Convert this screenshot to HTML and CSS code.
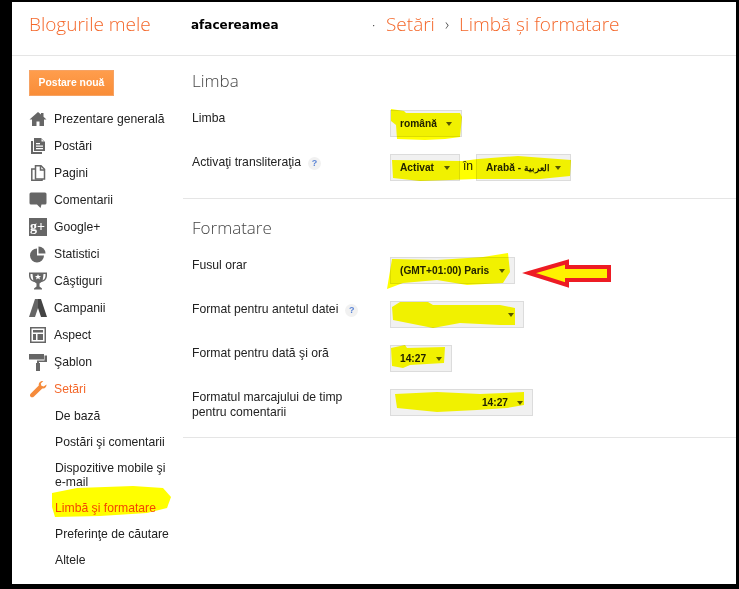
FILE: index.html
```html
<!DOCTYPE html>
<html lang="ro">
<head>
	<meta charset="UTF-8">
	<title>Limbă şi formatare</title>
	<link rel="stylesheet" href="styles.css">
</head>
<body>
	<div class="page">
		<!-- antet -->
		<div class="top">
			<div class="top-title">Blogurile mele</div>
			<div class="top-blog">afacereamea</div>
			<div class="top-dot">·</div>
			<div class="crumb">Setări</div>
			<div class="crumb-sep">›</div>
			<div class="crumb">Limbă şi formatare</div>
		</div>

		<div class="layout">
			<!-- meniu -->
			<div class="side">
				<div class="new-post">Postare nouă</div>
				<ul class="nav">
					<li><svg class="ico" viewBox="0 0 18 18"><path d="M9 2l3 2.600V3h2.500v3.800L17.500 9.500H15V16h-4.500v-4.500h-3V16H3V9.500H.5z"/></svg>Prezentare generală</li>
					<li><svg class="ico" viewBox="0 0 18 18"><path d="M2 4h2v11h9v2H2z"/><path fill-rule="evenodd" d="M5 1h7l4 4v9H5zM7 6v1.200h4V6zM7 8.500v1.200h7V8.500zM7 11v1.200h7V11zM12.500 2v2.500H15z"/></svg>Postări</li>
					<li><svg class="ico line" viewBox="0 0 18 18"><path d="M6.500 1.800h5.500l3.500 3.500v9.700h-9z"/><path d="M11.500 2v4h4"/><path d="M6 5H2.800v11.200H13V15"/></svg>Pagini</li>
					<li><svg class="ico" viewBox="0 0 18 18"><path d="M2 1.500h14a1.500 1.500 0 0 1 1.500 1.500v9a1.500 1.500 0 0 1-1.500 1.500h-3.500l-1 3.500-3.500-3.500H2A1.500 1.500 0 0 1 .5 12V3A1.500 1.500 0 0 1 2 1.500z"/></svg>Comentarii</li>
					<li><svg class="ico" viewBox="0 0 18 18"><rect width="18" height="18"/><text class="gplus" x="1" y="13">g+</text></svg>Google+</li>
					<li><svg class="ico" viewBox="0 0 18 18"><path d="M8 3.500a7 7 0 1 0 7 7H8z"/><path d="M9.500 1.500a7 7 0 0 1 7 7h-7z"/></svg>Statistici</li>
					<li><svg class="ico" viewBox="0 0 18 18"><path fill-rule="evenodd" d="M0 .5h18v3c0 3.500-2.500 6-5.500 6.500l-2 1.500v3l2.500 2v1H5v-1l2.500-2v-3l-2-1.500C2.500 9.500 0 7 0 3.500zM1.500 2v1.500c0 2 1 4 2.800 5L3.500 2zM16.500 2h-2l-.8 6.500c1.800-1 2.800-3 2.800-5z"/><path class="star" d="M9 2l.9 2.100h2.200l-1.800 1.300.7 2.200L9 6.300 7 7.600l.7-2.200-1.800-1.300h2.200z"/></svg>Câştiguri</li>
					<li><svg class="ico" viewBox="0 0 18 18"><path d="M6 0h3v9l-3 9H0z"/><path class="dark" d="M9 0h3l6 18h-6l-3-9z"/></svg>Campanii</li>
					<li><svg class="ico" viewBox="0 0 18 18"><path fill-rule="evenodd" d="M1 1h16v16H1zM2.500 2.500v13h13v-13zM4 4h10v2.500H4zM4 8h3v6H4zM8.500 8H14v6H8.500z"/></svg>Aspect</li>
					<li><svg class="ico" viewBox="0 0 18 18"><path d="M0 1h15v5.500H0zM15.500 2.500H18V9H10v2H8V7.500h7.500z"/><rect x="7" y="10" width="4" height="8"/></svg>Şablon</li>
					<li class="on"><svg class="ico" viewBox="0 0 18 18"><path d="M17.500 4.500c.3 2.300-1.700 4.400-4.200 3.900L5 16.500c-1 1-2.500 1.200-3.400.2-.9-1-.7-2.300.2-3.200l8-8C9.300 3 11.500.8 14.300 1l-2.500 2.500.6 2.300 2.300.6z"/></svg>Setări</li>
				</ul>
				<ul class="subnav">
					<li>De bază</li>
					<li>Postări şi comentarii</li>
					<li>Dispozitive mobile şi e-mail</li>
					<li class="on">Limbă şi formatare</li>
					<li>Preferinţe de căutare</li>
					<li>Altele</li>
				</ul>
			</div>

			<!-- continut -->
			<div class="main">
				<div class="sect">
					<h2>Limba</h2>
					<div class="row">
						<div class="lbl">Limba</div>
						<div class="sel">română<i></i></div>
					</div>
					<div class="row">
						<div class="lbl">Activaţi transliteraţia<span class="help">?</span></div>
						<div class="sel w-act">Activat<i></i></div>
						<span class="in">în</span>
						<div class="sel w-lang"><span>Arabă - <span class="ar">العربية</span></span><i></i></div>
					</div>
				</div>
				<div class="sect fmt">
					<h2>Formatare</h2>
					<div class="row">
						<div class="lbl">Fusul orar</div>
						<div class="sel w-zone">(GMT+01:00) Paris<i></i></div>
					</div>
					<div class="row">
						<div class="lbl">Format pentru antetul datei<span class="help">?</span></div>
						<div class="sel w-date"><i></i></div>
					</div>
					<div class="row">
						<div class="lbl">Format pentru dată şi oră</div>
						<div class="sel w-time">14:27<i></i></div>
					</div>
					<div class="row">
						<div class="lbl">Formatul marcajului de timp<br>pentru comentarii</div>
						<div class="sel w-stamp">14:27<i></i></div>
					</div>
				</div>
			</div>
		</div>

		<!-- marcaje galbene si sageata, desenate peste pagina -->
		<svg class="marks" viewBox="0 0 739 589">
			<path class="hl" d="M391 109l13 2 2 2h54l2 4-2 20-15 2-20 1-28-1-1-14-5-4z"/>
			<path class="hl" d="M392 160l70 1 16-2 40-3 53 4-1 16-30 3-45 0-20 0-25 1-30 1-27-3z"/>
			<path class="hl" d="M387 289l5-30 45 1 46-3 25-4 2 19-7 11-36 2-30-5-34 3z"/>
			<path class="hl" d="M392 307l8-5h28l5 3h67l15 3v17h-15l-40-2-27 5-40-8z"/>
			<path class="hl" d="M391 348l14-3 2 3 38-1-1 16-34 2-7 3-11-2z"/>
			<path class="hl" d="M395 394l42-2 43 2 44-2v13l-17 3-30 2-40 2-40-4z"/>
			<path class="hl" d="M52 493l25-5 56-2 30 2 8 9-4 11-20 5-47 3-45 1-3-10z"/>
			<path class="arrow" d="M529 273l38-11v5h42v13h-42v5z"/>
		</svg>
	</div>
</body>
</html>
```

FILE: styles.css
```css
*{box-sizing: border-box;}
html,body{margin: 0;padding: 0;}
body{background: #000;font: 12.200px/15px "Liberation Sans",Arial,sans-serif;color: #222;}
ul{list-style: none;margin: 0;padding: 0;}

.page{width: 739px;height: 589px;padding: 2px 3px 5px 12px;position: relative;overflow: hidden;}
.page>.top,.page>.layout{background: #fff;}

.top{display: flex;align-items: center;height: 54px;padding: 0 0 8px 17px;border-bottom: 1px solid #e5e5e5;color: #f4672a;font-family: "Open Sans",sans-serif;font-size: 19px;font-weight: 300;}
.top-title{width: 162px;}
.top-blog{width: 181px;color: #000;font: bold 12px "DejaVu Sans",sans-serif;}
.top-dot{width: 14px;color: #333;font-size: 14px;}
.crumb-sep{width: 24px;text-align: center;color: #444;font-size: 16px;}

.layout{display: flex;height: 528px;}

.side{width: 171px;padding: 14px 0 0 17px;}
.new-post{width: 85px;height: 26px;margin-bottom: 9px;border: 1px solid #f6a263;background: linear-gradient(#ff9d4c,#f98d38);color: #fff;font-size: 10.400px;font-weight: bold;line-height: 24px;text-align: center;}
.nav li{display: flex;align-items: center;gap: 7px;height: 27px;padding-top: 1px;}
.nav li.on{color: #f4672a;}
.ico{width: 18px;height: 18px;flex: none;fill: #666;}
.ico .dark{fill: #444;}
.ico .star{fill: #fff;}
.ico.line{fill: none;stroke: #666;stroke-width: 1.500;}
.nav li.on .ico{fill: #f58b3c;}
.gplus{fill: #fff;font: bold 14px "Liberation Serif",serif;}

.subnav{padding: 1px 0 0 26px;width: 146px;}
.subnav li{padding: 6px 0;line-height: 14px;}
.subnav li.on{color: #f4461e;}

.main{flex: 1;}
.sect{padding: 14px 0 0 9px;border-bottom: 1px solid #e5e5e5;}
.sect.fmt{padding: 18px 0 4px 9px;}
h2{margin: 0 0 18px;height: 22px;color: #444;font: 300 17px/22px "Open Sans",sans-serif;}
.row{display: flex;height: 27px;margin-bottom: 17px;}
.lbl{width: 198px;padding-top: 1px;}
.help{display: inline-block;width: 13px;height: 13px;margin-left: 7px;border-radius: 50%;background: #f1f1f1;color: #5c85d6;font-size: 9px;font-weight: bold;line-height: 13px;text-align: center;}

.sel{display: flex;align-items: center;justify-content: space-between;height: 27px;padding: 0 9px;border: 1px solid #dcdcdc;background: #f1f1f1;font-size: 10.200px;font-weight: bold;gap: 9px;white-space: nowrap;}
.sel i{flex: none;width: 0;height: 0;border: 3.500px solid transparent;border-top: 4px solid #555;border-bottom: 0;}
.ar{font-size: 8.500px;}
.w-act{width: 70px;}
.w-lang{width: 95px;gap: 3px;}
.w-zone{width: 125px;}
.w-time{width: 62px;}
.w-date{width: 134px;justify-content: flex-end;}
.w-stamp{width: 143px;justify-content: flex-end;}
.in{width: 16px;text-align: center;line-height: 24px;}

.marks{position: absolute;left: 0;top: 0;width: 739px;height: 589px;mix-blend-mode: multiply;pointer-events: none;}
.hl{fill: #ffff00;}
.arrow{fill: #fff200;stroke: #ed1c24;stroke-width: 4;}
```
